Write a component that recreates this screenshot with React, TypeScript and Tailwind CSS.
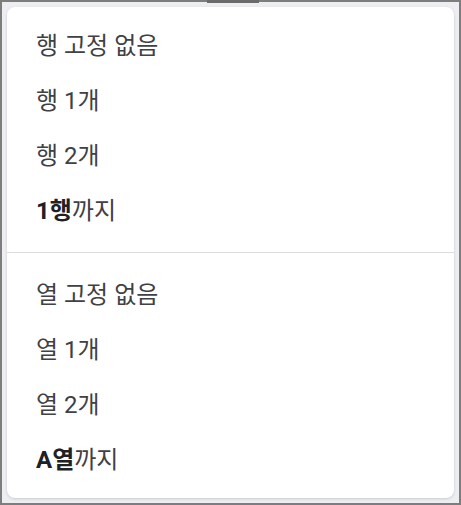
const rows1 = ['행 고정 없음', '행 1개', '행 2개'];
const rows2 = ['열 고정 없음', '열 1개', '열 2개'];

function Item({ children }: { children: React.ReactNode }) {
  return (
    <div className="flex h-[55px] items-center pl-[29px] text-[24px] text-[#3f4145]">
      {children}
    </div>
  );
}

export default function App() {
  return (
    <div
      className="relative h-[505px] w-[461px] border-2 border-[#7d7d7d] bg-[#eceef1] p-[5px]"
      style={{ fontFamily: 'Roboto, "Noto Sans CJK KR", sans-serif' }}
    >
      <div className="absolute left-[205px] top-[-2px] h-[3px] w-[52px] bg-[#6b6b6b]" />
      <div className="flex h-full flex-col rounded-lg bg-white pt-[11px] shadow-[0_1px_3px_rgba(0,0,0,0.15)]">
        {rows1.map((r) => (
          <Item key={r}>{r}</Item>
        ))}
        <Item>
          <span className="font-bold text-[#202124]">1행</span>까지
        </Item>
        <div className="my-[14px] h-px bg-[#dadce0]" />
        {rows2.map((r) => (
          <Item key={r}>{r}</Item>
        ))}
        <Item>
          <span className="font-bold text-[#202124]">A열</span>까지
        </Item>
      </div>
    </div>
  );
}
